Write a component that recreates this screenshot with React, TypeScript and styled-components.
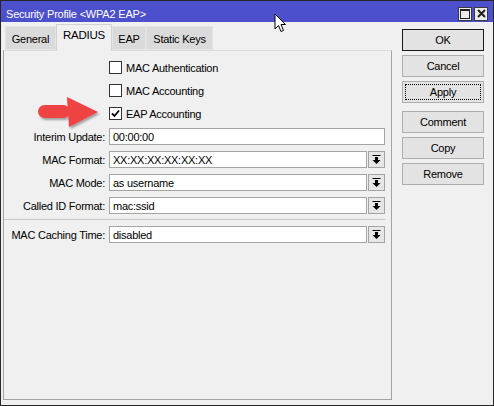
import React from "react"
import styled, { createGlobalStyle } from "styled-components"

const GlobalStyle = createGlobalStyle`
    html, body {
        margin: 0;
        padding: 0;
        background: #f0f0f0;
    }
    body {
        font-family: "Liberation Sans", Arial, sans-serif;
        font-size: 11px;
        color: #000;
    }
    * {
        box-sizing: border-box;
    }
`

const Window = styled.div`
    position: relative;
    width: 494px;
    height: 406px;
    border: 1px solid #262626;
    background: #f0f0f0;
    display: flex;
    flex-direction: column;
    overflow: hidden;
`

const TitleBar = styled.div`
    height: 21px;
    padding: 4px 5px 0 5px;
    background: #4c50cc;
    color: #fff;
    display: flex;
    align-items: center;
    justify-content: space-between;
`

const TitleText = styled.span`
    font-size: 11px;
    letter-spacing: -0.2px;
`

const TitleControls = styled.div`
    display: flex;
    gap: 2px;
`

const TitleButton = styled.div`
    width: 14px;
    height: 14px;
    border: 1px solid #3a3a3a;
    background: #ececec;
    display: flex;
    align-items: center;
    justify-content: center;
`

const Body = styled.div`
    flex: 1;
    display: flex;
    padding: 2px 0 5px 2px;
`

const LeftColumn = styled.div`
    width: 389px;
    display: flex;
    flex-direction: column;
`

const TabRow = styled.div`
    height: 26px;
    display: flex;
    align-items: flex-end;
    padding-left: 2px;
    position: relative;
    z-index: 1;
`

const Tab = styled.div<{ $active?: boolean; $width: number }>`
    height: ${p => (p.$active ? "27px" : "24px")};
    margin-bottom: ${p => (p.$active ? "-1px" : "0")};
    padding: ${p => (p.$active ? "0 0 6px 0" : "2px 0 0 0")};
    width: ${p => p.$width}px;
    display: flex;
    align-items: center;
    justify-content: center;
    background: ${p => (p.$active ? "#f0f0f0" : "#dadada")};
    border: 1px solid ${p => (p.$active ? "#d2d2d2" : "#e4e4e4")};
    border-bottom: ${p => (p.$active ? "none" : "1px solid #e4e4e4")};
    letter-spacing: -0.25px;
    font-size: ${p => (p.$active ? "11.5px" : "11px")};
`

const Panel = styled.div`
    position: relative;
    flex: 1;
    border: 1px solid #a3a3a3;
    border-top-color: #dcdcdc;
    padding: 5px 6px 0 0;
    display: flex;
    flex-direction: column;
`

const Row = styled.div`
    height: 23px;
    display: flex;
    align-items: center;
    gap: 4px;
`

const Label = styled.div`
    width: 101px;
    text-align: right;
    white-space: nowrap;
    letter-spacing: -0.25px;
`

const Field = styled.div`
    flex: 1;
    display: flex;
    gap: 1px;
    align-items: center;
`

const TextBox = styled.div`
    flex: 1;
    height: 17px;
    background: #fff;
    border: 1px solid #a4a4a4;
    padding: 0 3px;
    display: flex;
    align-items: center;
    letter-spacing: -0.25px;
    white-space: nowrap;
`

const DropButton = styled.div`
    width: 17px;
    height: 17px;
    background: #e6e6e6;
    border: 1px solid #a4a4a4;
    display: flex;
    align-items: center;
    justify-content: center;
`

const CheckLine = styled.label`
    display: flex;
    align-items: center;
    gap: 4px;
    letter-spacing: -0.25px;
`

const CheckBox = styled.span`
    width: 13px;
    height: 13px;
    background: #fff;
    border: 1px solid #333;
    display: flex;
    align-items: center;
    justify-content: center;
`

const Separator = styled.div`
    height: 1px;
    background: #c6c6c6;
    margin: 2px 0 3px 0;
`

const Callout = styled.svg`
    position: absolute;
    left: 31px;
    top: 43px;
`

const Cursor = styled.svg`
    position: absolute;
    left: 273px;
    top: 12px;
`

const RightColumn = styled.div`
    margin-left: 10px;
    padding-top: 5px;
    display: flex;
    flex-direction: column;
    gap: 4px;
`

const Button = styled.div<{ $default?: boolean; $focused?: boolean; $gapBefore?: boolean }>`
    width: 82px;
    height: 22px;
    margin-top: ${p => (p.$gapBefore ? "4px" : "0")};
    background: #e3e3e3;
    border: 1px solid ${p => (p.$default ? "#1a1a1a" : "#adadad")};
    display: flex;
    align-items: center;
    justify-content: center;
    letter-spacing: -0.25px;
    outline: ${p => (p.$focused ? "1px dotted #000" : "none")};
    outline-offset: -4px;
`

const DropIcon = () => (
    <svg width="9" height="9" viewBox="0 0 9 9">
        <rect x="0.5" y="0" width="8" height="1" fill="#000" />
        <rect x="3" y="2" width="3" height="3" fill="#000" />
        <polygon points="0.5,5 8.5,5 4.5,9" fill="#000" />
    </svg>
)

const CheckMark = () => (
    <svg width="9" height="9" viewBox="0 0 9 9">
        <path d="M1 4.5 L3.5 7 L8 1.5" stroke="#000" strokeWidth="1.8" fill="none" />
    </svg>
)

const Combo: React.FC<{ value: string }> = ({ value }) => (
    <Field>
        <TextBox>{value}</TextBox>
        <DropButton><DropIcon /></DropButton>
    </Field>
)

const Check: React.FC<{ label: string; checked?: boolean }> = ({ label, checked }) => (
    <Row>
        <Label />
        <CheckLine>
            <CheckBox>{checked && <CheckMark />}</CheckBox>
            {label}
        </CheckLine>
    </Row>
)

const tabs = [
    { name: "General", width: 51 },
    { name: "RADIUS", width: 56, active: true },
    { name: "EAP", width: 34 },
    { name: "Static Keys", width: 67 },
]

export default function App() {
    return <>
        <GlobalStyle />
        <Window>
            <TitleBar>
                <TitleText>Security Profile &lt;WPA2 EAP&gt;</TitleText>
                <TitleControls>
                    <TitleButton>
                        <svg width="10" height="10" viewBox="0 0 10 10">
                            <rect x="0.5" y="0.5" width="9" height="9" fill="none" stroke="#222" />
                            <rect x="0" y="0" width="10" height="2" fill="#222" />
                        </svg>
                    </TitleButton>
                    <TitleButton>
                        <svg width="9" height="9" viewBox="0 0 9 9">
                            <path d="M1 1 L8 8 M8 1 L1 8" stroke="#222" strokeWidth="2" />
                        </svg>
                    </TitleButton>
                </TitleControls>
            </TitleBar>
            <Body>
                <LeftColumn>
                    <TabRow>
                        {tabs.map(t => (
                            <Tab key={t.name} $active={t.active} $width={t.width}>{t.name}</Tab>
                        ))}
                    </TabRow>
                    <Panel>
                        <Check label="MAC Authentication" />
                        <Check label="MAC Accounting" />
                        <Check label="EAP Accounting" checked />
                        <Row>
                            <Label>Interim Update:</Label>
                            <Field><TextBox>00:00:00</TextBox></Field>
                        </Row>
                        <Row>
                            <Label>MAC Format:</Label>
                            <Combo value="XX:XX:XX:XX:XX:XX" />
                        </Row>
                        <Row>
                            <Label>MAC Mode:</Label>
                            <Combo value="as username" />
                        </Row>
                        <Row>
                            <Label>Called ID Format:</Label>
                            <Combo value="mac:ssid" />
                        </Row>
                        <Separator />
                        <Row>
                            <Label>MAC Caching Time:</Label>
                            <Combo value="disabled" />
                        </Row>
                        <Callout width="70" height="40" viewBox="0 0 70 40">
                            <defs>
                                <filter id="shadow" x="-20%" y="-20%" width="140%" height="150%">
                                    <feDropShadow dx="1.5" dy="2" stdDeviation="1.2" floodColor="#000" floodOpacity="0.35" />
                                </filter>
                            </defs>
                            <g filter="url(#shadow)" fill="#ef4343">
                                <rect x="3" y="11" width="32" height="13" rx="6.5" />
                                <polygon points="32,3 63,18 34,33" />
                            </g>
                        </Callout>
                    </Panel>
                </LeftColumn>
                <RightColumn>
                    <Button $default>OK</Button>
                    <Button>Cancel</Button>
                    <Button $focused>Apply</Button>
                    <Button $gapBefore>Comment</Button>
                    <Button>Copy</Button>
                    <Button>Remove</Button>
                </RightColumn>
            </Body>
            <Cursor width="13" height="20" viewBox="0 0 13 20">
                <path d="M1 1 L1 16 L4.5 12.5 L7 18.5 L9.5 17.5 L7 11.5 L11.5 11.5 Z" fill="#fff" stroke="#000" strokeWidth="1" strokeLinejoin="round" />
            </Cursor>
        </Window>
    </>
}
